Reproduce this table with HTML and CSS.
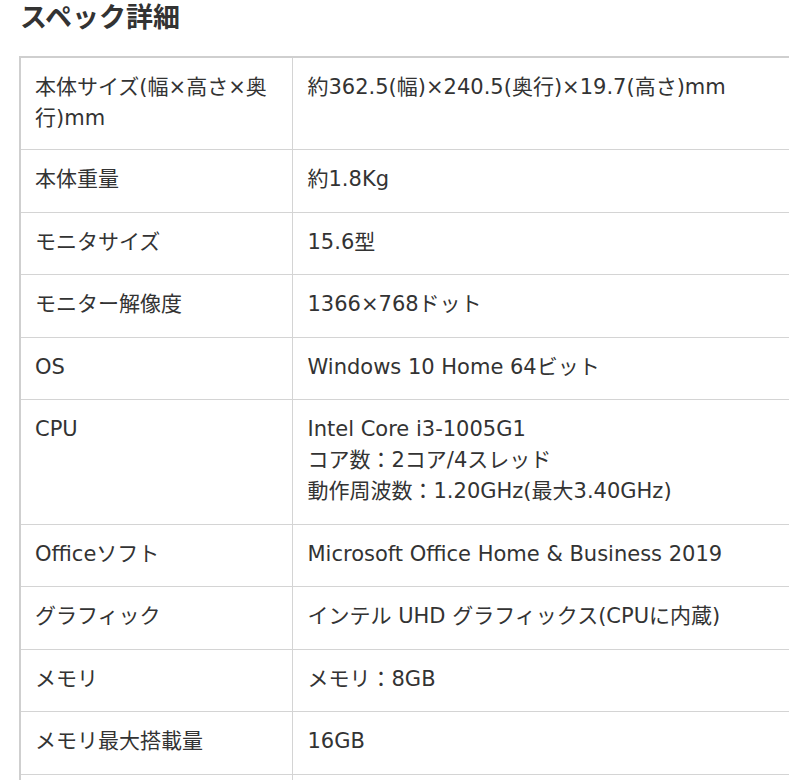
FILE: index.html
```html
<!DOCTYPE html>
<html lang="ja">
<head>
<meta charset="utf-8">
<link rel="stylesheet" href="styles.css">
</head>
<body>
<h2 class="title">スペック詳細</h2>
<table class="spec">
<colgroup><col class="c-label"><col class="c-value"></colgroup>
<tr class="first"><th>本体サイズ(幅×高さ×奥行)mm</th><td>約362.5(幅)×240.5(奥行)×19.7(高さ)mm</td></tr>
<tr><th>本体重量</th><td>約1.8Kg</td></tr>
<tr><th>モニタサイズ</th><td>15.6型</td></tr>
<tr><th>モニター解像度</th><td>1366×768ドット</td></tr>
<tr><th>OS</th><td>Windows 10 Home 64ビット</td></tr>
<tr><th>CPU</th><td>Intel Core i3-1005G1<br>コア数：2コア/4スレッド<br>動作周波数：1.20GHz(最大3.40GHz)</td></tr>
<tr><th>Officeソフト</th><td>Microsoft Office Home &amp; Business 2019</td></tr>
<tr><th>グラフィック</th><td>インテル UHD グラフィックス(CPUに内蔵)</td></tr>
<tr><th>メモリ</th><td>メモリ：8GB</td></tr>
<tr><th>メモリ最大搭載量</th><td>16GB</td></tr>
<tr><th>ストレージ</th><td>SSD：256GB</td></tr>
</table>
</body>
</html>
```
FILE: styles.css
```css
html, body {
  margin: 0;
  padding: 0;
  background: #fff;
  overflow: hidden;
}
body {
  color: #333;
  font-family: "DejaVu Sans", "Noto Sans CJK JP", sans-serif;
}
.title {
  margin: 0 0 25px 20px;
  font-size: 27px;
  line-height: 31px;
  font-weight: 700;
  font-family: "Noto Sans CJK JP", sans-serif;
  color: #333;
}
.spec {
  margin-left: 19px;
  width: 820px;
  table-layout: fixed;
  border-collapse: collapse;
  border: 2px solid #cfcfcf;
}
.c-label { width: 272px; }
.spec th, .spec td {
  border: 1px solid #d4d4d4;
  padding: 14px 14px 16.5px 15px;
  font-size: 21px;
  line-height: 31px;
  font-weight: 400;
  text-align: left;
  vertical-align: top;
  color: #333;
}
.spec th { padding-left: 14px; }
.spec .first th, .spec .first td { padding-bottom: 15px; }
```
